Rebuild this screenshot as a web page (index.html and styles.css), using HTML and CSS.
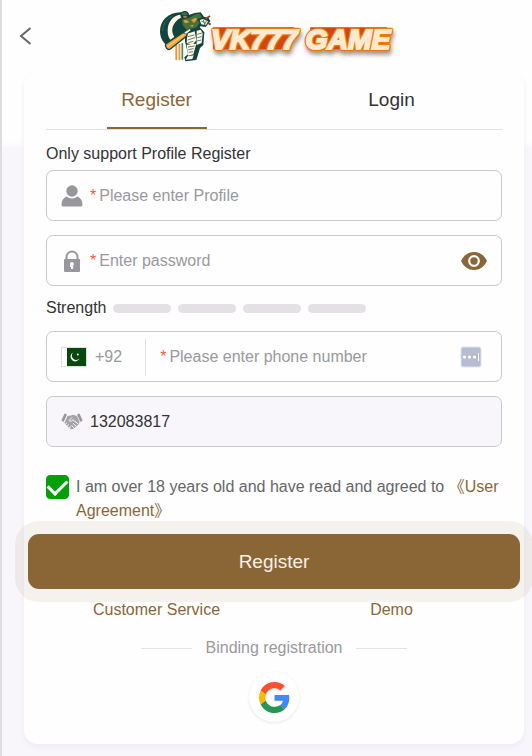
FILE: index.html
```
<!DOCTYPE html>
<html lang="en">

<head>
  <meta charset="UTF-8">
  <meta name="viewport" content="width=device-width, initial-scale=1.0">
  <title>VK777 Game - Register</title>
  <link rel="stylesheet" href="styles.css">
</head>

<body>
  <header class="top-bar">
    <button class="back" type="button" aria-label="Back">
      <svg width="13" height="18" viewBox="0 0 13 18"><path d="M11.500 1 2 9l9.500 8" fill="none" stroke="#666" stroke-width="2"/></svg>
    </button>
    <svg class="logo" width="238" height="56" viewBox="24 24 714 168" role="img" aria-label="VK777 GAME">
      <defs>
        <filter id="glow" x="-10%" y="-30%" width="120%" height="180%">
          <feDropShadow dx="3" dy="10" stdDeviation="7" flood-color="#6b564b" flood-opacity="0.65"/>
        </filter>
      </defs>
      <!-- ball -->
      <path d="M96 37C56 33 27 60 27 93c0 18 7 32 19 42l62-38-4-50z" fill="#12443d"/>
      <path d="M92 44C66 44 50 66 50 92c0 12 3 20 8 27l12-8C58 92 62 68 92 52z" fill="#fff6e6"/>
      <path d="M35 93c1-20 11-36 28-44" fill="none" stroke="#2b6a58" stroke-width="3"/>
      <!-- stumps -->
      <path d="M76 134v46M85 132v48" stroke="#e79a3c" stroke-width="6"/>
      <path d="M94 129v50" stroke="#49865a" stroke-width="5"/>
      <path d="M81 134v46" stroke="#fff3d5" stroke-width="2"/>
      <!-- legs -->
      <path d="M103 88l42-8 15 17-3 38-10 9-11 36-33 4-3-12 11-9-9-39z" fill="#12443d"/>
      <path d="M109 101l22-7 5 27-12 14-17-6zM137 92l12-3 6 11-3 29-15 6zM107 134l29-3-9 32-16 4zM110 169l18-3-4 11-20 2z" fill="#fff6e6"/>
      <path d="M110 110l20-5M110 120l22-7M112 128l15-4M139 103l14-4M139 113l13-3M138 123l13-3M111 141l20-3M112 149l16-3M113 157l13-2" stroke="#12443d" stroke-width="2"/>
      <!-- shirt and arms -->
      <path d="M90 55l23-10 18-6 18-2 10 13 14 4 5 10-14 17-15-2-12 10-35 10-14-25z" fill="#12443d"/>
      <path d="M93 59l25-7 15-9 13-2 7 11-16 6 9 10-9 14-29 9-12-14z" fill="#46713a"/>
      <path d="M97 61l10-1 8 7-13 3zM120 60l13-7 6 4-10 12zM117 77l11-3-4 7z" fill="#d8a03b"/>
      <path d="M146 61l9-4 16 7-6 12-14-3z" fill="#fff6e6"/>
      <path d="M151 63l9 4M157 60l5 15M166 63l-5 11" stroke="#12443d" stroke-width="2"/>
      <path d="M163 57l14-9M171 69l8 5" stroke="#7d502b" stroke-width="6"/>
      <!-- helmet -->
      <path d="M88 47c0-10 8-16 18-13 7 2 9 8 8 15l-12 6-12-3z" fill="#12443d"/>
      <path d="M92 43c2-6 8-8 15-4l3 6-15 1z" fill="#46713a"/>
      <path d="M98 47l10 1-3 7-9-3z" fill="#bd7645"/>
      <!-- bat -->
      <path d="M44 132l50-33c9-4 17 1 13 9l-49 39c-9 6-17-8-14-15z" fill="#f3a43c" stroke="#12443d" stroke-width="4"/>
      <path d="M49 140l51-36" stroke="#ffc45d" stroke-width="4"/>
      <path d="M99 97l17-11 4 5-15 12z" fill="#fff6e6" stroke="#12443d" stroke-width="2"/>
      <!-- wordmark -->
      <g class="wordmark">
        <g filter="url(#glow)">
          <path d="M186 82h244l-40 66H186zM478 82h230l-10 66H472z" fill="#cf4612"/>
          <text x="180" y="146" class="wordmark-edge">VK777 GAME</text>
        </g>
        <text x="180" y="146" class="wordmark-face">VK777 GAME</text>
      </g>
    </svg>
  </header>

  <main class="card">
    <nav class="tabs">
      <button class="tab active" type="button"><span>Register</span></button>
      <button class="tab" type="button"><span>Login</span></button>
    </nav>

    <form class="register-form">
      <p class="hint">Only support Profile Register</p>

      <div class="field">
        <svg class="field-icon" width="22" height="22" viewBox="0 0 22 22" fill="#98979b">
          <circle cx="11" cy="6" r="5.700"/>
          <path d="M5.500 11.500c3.500 2.600 7.500 2.600 11 0 3.500 1.500 5 4.500 5 8 0 1.200-.5 2-1.500 2H2c-1 0-1.500-.8-1.500-2 0-3.500 1.500-6.500 5-8z"/>
        </svg>
        <label class="required" for="profile">*</label>
        <input id="profile" type="text" placeholder="Please enter Profile" aria-label="Profile">
      </div>

      <div class="field">
        <svg class="field-icon" width="22" height="22" viewBox="0 0 22 22">
          <path d="M5.500 10V7a5.500 5.500 0 0 1 11 0v3" fill="none" stroke="#98979b" stroke-width="2"/>
          <rect x="3" y="9" width="16" height="13" rx="1" fill="#98979b"/>
          <path d="M11 12a2 2 0 0 1 1.200 3.500V19h-2.200v-2H9v-3a2 2 0 0 1 2-2z" fill="#fff"/>
        </svg>
        <label class="required" for="password">*</label>
        <input id="password" type="password" placeholder="Enter password" aria-label="Password">
        <button class="icon-button" type="button" aria-label="Show password">
          <svg width="26" height="18" viewBox="0 0 26 18">
            <path d="M0 9C3 3 7.500 0 13 0s10 3 13 9c-3 6-7.500 9-13 9S3 15 0 9z" fill="#8a6637"/>
            <circle cx="13" cy="9" r="4.800" fill="none" stroke="#fff" stroke-width="2.200"/>
          </svg>
        </button>
      </div>

      <div class="strength">
        <span>Strength</span>
        <i class="strength-bar"></i>
        <i class="strength-bar"></i>
        <i class="strength-bar"></i>
        <i class="strength-bar"></i>
      </div>

      <div class="field">
        <button class="country" type="button">
          <svg width="26" height="20" viewBox="0 0 26 20">
            <rect x=".5" y=".5" width="25" height="19" fill="#fff" stroke="#dedde0"/>
            <rect x="6" y="1" width="19" height="18" fill="#06490b"/>
            <path d="M12 5.500a4.700 4.700 0 1 0 6.500 6A4.300 4.300 0 0 1 12 5.500z" fill="#fff"/>
            <circle cx="16.800" cy="7.500" r="1" fill="#fff"/>
          </svg>
          <span>+92</span>
        </button>
        <label class="required" for="phone">*</label>
        <input id="phone" type="tel" placeholder="Please enter phone number" aria-label="Phone number">
        <button class="icon-button code" type="button" aria-label="Enter code">
          <svg width="22" height="22" viewBox="0 0 22 22">
            <rect x="1" y="1" width="20" height="20" rx="2" fill="#b6bdd0" stroke="#dfe3ef"/>
            <g fill="#fff">
              <circle cx="4.500" cy="11" r="1.600"/>
              <circle cx="9.500" cy="11" r="1.600"/>
              <circle cx="14.500" cy="11" r="1.600"/>
              <rect x="18" y="7" width="1" height="8"/>
            </g>
          </svg>
        </button>
      </div>

      <div class="field filled">
        <svg class="field-icon" width="22" height="18" viewBox="0 0 22 18">
          <path d="M3.600.5 6 1.500 2.600 9 .3 7.500zM18.400.5 16 1.500 19.400 9l2.300-1.500z" fill="#98979b"/>
          <path d="M6.500 3 10 2.500l2-.8 4 1.300 2.600 6-1.100 2.500-3.500 3-3 1.900-3-1.400-4.600-5z" fill="#a4a3a8"/>
          <path d="M11 4.500 8 7.500c1 1.200 2.600 1 4-.7l5 4M4 11.500l2-1.700M5.800 13.500l2.200-2M8 15.200l2-1.900M12.200 10.500l2.800 2.700M10.500 12.500l2.200 2" fill="none" stroke="#f8f6fa"/>
        </svg>
        <input id="invite" type="text" value="132083817" aria-label="Invitation code" readonly>
      </div>

      <div class="agreement">
        <input id="agree" type="checkbox" checked>
        <label for="agree">I am over 18 years old and have read and agreed to <a href="#">《User Agreement》</a></label>
      </div>

      <button class="submit" type="submit">Register</button>
    </form>

    <div class="links">
      <a href="#">Customer Service</a>
      <a href="#">Demo</a>
    </div>

    <p class="divider">Binding registration</p>

    <button class="google" type="button" aria-label="Google">
      <svg width="31" height="31" viewBox="0 0 48 48">
        <path fill="#f9502f" d="M24 9.500c3.540 0 6.710 1.220 9.210 3.600l6.850-6.850C35.900 2.380 30.470 0 24 0 14.620 0 6.510 5.380 2.560 13.220l7.980 6.190C12.430 13.720 17.740 9.500 24 9.500z"/>
        <path fill="#4188fb" d="M46.980 24.550c0-1.570-.15-3.090-.38-4.550H24v9.020h12.940c-.58 2.960-2.260 5.480-4.780 7.180l7.730 6c4.510-4.180 7.090-10.360 7.090-17.650z"/>
        <path fill="#fdb900" d="M10.530 28.590A14.500 14.500 0 0 1 9.770 24c0-1.600.27-3.140.76-4.590l-7.980-6.190A24 24 0 0 0 0 24c0 3.880.92 7.540 2.560 10.780l7.970-6.190z"/>
        <path fill="#269653" d="M24 48c6.480 0 11.930-2.130 15.890-5.810l-7.730-6c-2.150 1.450-4.920 2.300-8.160 2.300-6.260 0-11.570-4.220-13.470-9.910l-7.980 6.190C6.510 42.620 14.620 48 24 48z"/>
      </svg>
    </button>
  </main>
</body>

</html>
```
FILE: styles.css
```
* {
  box-sizing: border-box;
}

body {
  margin: 0;
  padding: 0 8px 12px 22px;
  border-left: 2px solid #dddcdf;
  font-family: "Liberation Sans", "Noto Sans CJK SC", Arial, sans-serif;
  font-size: 16px;
  line-height: 20px;
  color: #333;
  background: #f8f6fa linear-gradient(#fefefe 142px, #f8f6fa 148px) no-repeat;
  min-height: 100vh;
}

button {
  padding: 0;
  border: none;
  background: none;
  font: inherit;
  color: inherit;
  cursor: pointer;
}

svg {
  display: block;
  flex-shrink: 0;
}

a {
  color: #8a6637;
  text-decoration: none;
}

.top-bar {
  display: flex;
  align-items: center;
  height: 72px;
  margin-left: -5px;
}

.logo {
  margin: 0 auto;
}

.wordmark {
  font-family: "Liberation Sans", Arial, sans-serif;
  font-size: 85px;
  font-weight: bold;
  font-style: italic;
}

.wordmark-edge {
  fill: #e9780c;
  stroke: #e9780c;
  stroke-width: 14px;
  stroke-linejoin: round;
}

.wordmark-face {
  fill: #ffe9cf;
  stroke: #ffe9cf;
  stroke-width: 6px;
}

.card {
  padding: 0 22px 22px;
  border-radius: 14px;
  background: #fefefe;
  box-shadow: 0 3px 5px #ecebf8;
}

.tabs,
.links {
  display: grid;
  grid-template-columns: 1fr 1fr;
  column-gap: 14px;
  text-align: center;
}

.tabs {
  border-bottom: 1px solid #e0dfe1;
}

.tab {
  font-size: 19px;
  line-height: 55px;
}

.tab span {
  display: block;
  width: 100px;
  margin: 0 auto;
  border-bottom: 2px solid transparent;
}

.tab.active {
  color: #8a6637;
}

.tab.active span {
  border-color: #8a6637;
}

.hint {
  margin: 14px 0 6px;
}

.field {
  display: flex;
  align-items: center;
  height: 51px;
  margin-bottom: 14px;
  padding: 0 14px;
  border: 1px solid #c9c8ca;
  border-radius: 7px;
}

.field.filled {
  margin-bottom: 28px;
  background: #f8f6fa;
}

.field-icon {
  margin-right: 7px;
}

.field input {
  flex: 1;
  min-width: 0;
  padding: 0;
  border: none;
  outline: none;
  background: none;
  font: inherit;
  color: #333;
}

.field input::placeholder {
  color: #9a999d;
}

.required {
  margin-right: 3px;
  color: #fa5a3c;
}

.icon-button.code {
  margin-right: 5px;
}

.country {
  display: flex;
  align-items: center;
  gap: 8px;
  height: 36px;
  margin-right: 14px;
  padding-right: 23px;
  border-right: 1px solid #e0dfe1;
  color: #9a999d;
}

.strength {
  display: flex;
  align-items: center;
  gap: 7px;
  margin-bottom: 15px;
  line-height: 16px;
}

.strength-bar {
  width: 58px;
  height: 9px;
  border-radius: 5px;
  background: #e3e1e4;
}

.agreement {
  display: flex;
  gap: 7px;
  line-height: 24px;
  color: #666;
}

.agreement input {
  display: grid;
  place-items: center;
  flex-shrink: 0;
  appearance: none;
  width: 23px;
  height: 24px;
  margin: 0;
  border: 1px solid #c9c8ca;
  border-radius: 4px;
}

.agreement input:checked {
  border-color: #04a008;
  background: #04a008;
}

.agreement input:checked::before {
  content: "";
  width: 16px;
  height: 9px;
  margin-bottom: 5px;
  border: solid #fff;
  border-width: 0 0 3px 3px;
  transform: rotate(-45deg);
}

.submit {
  display: block;
  width: calc(100% + 36px);
  height: 55px;
  margin: 11px -18px 11px;
  border-radius: 11px;
  background: #8a6637;
  box-shadow: 0 0 0 13px rgba(138, 102, 55, 0.08);
  color: #f6f1ea;
  font-size: 19px;
}

.links {
  position: relative;
}

.divider {
  display: flex;
  align-items: center;
  justify-content: center;
  gap: 14px;
  margin: 18px 0 14px;
  color: #9a999d;
}

.divider::before,
.divider::after {
  content: "";
  width: 51px;
  height: 1px;
  background: #e3e2e5;
}

.google {
  display: grid;
  place-items: center;
  width: 50px;
  height: 50px;
  margin: 0 auto;
  border-radius: 50%;
  background: #fff;
  box-shadow: 0 1px 3px rgba(60, 40, 80, 0.12);
}
```
